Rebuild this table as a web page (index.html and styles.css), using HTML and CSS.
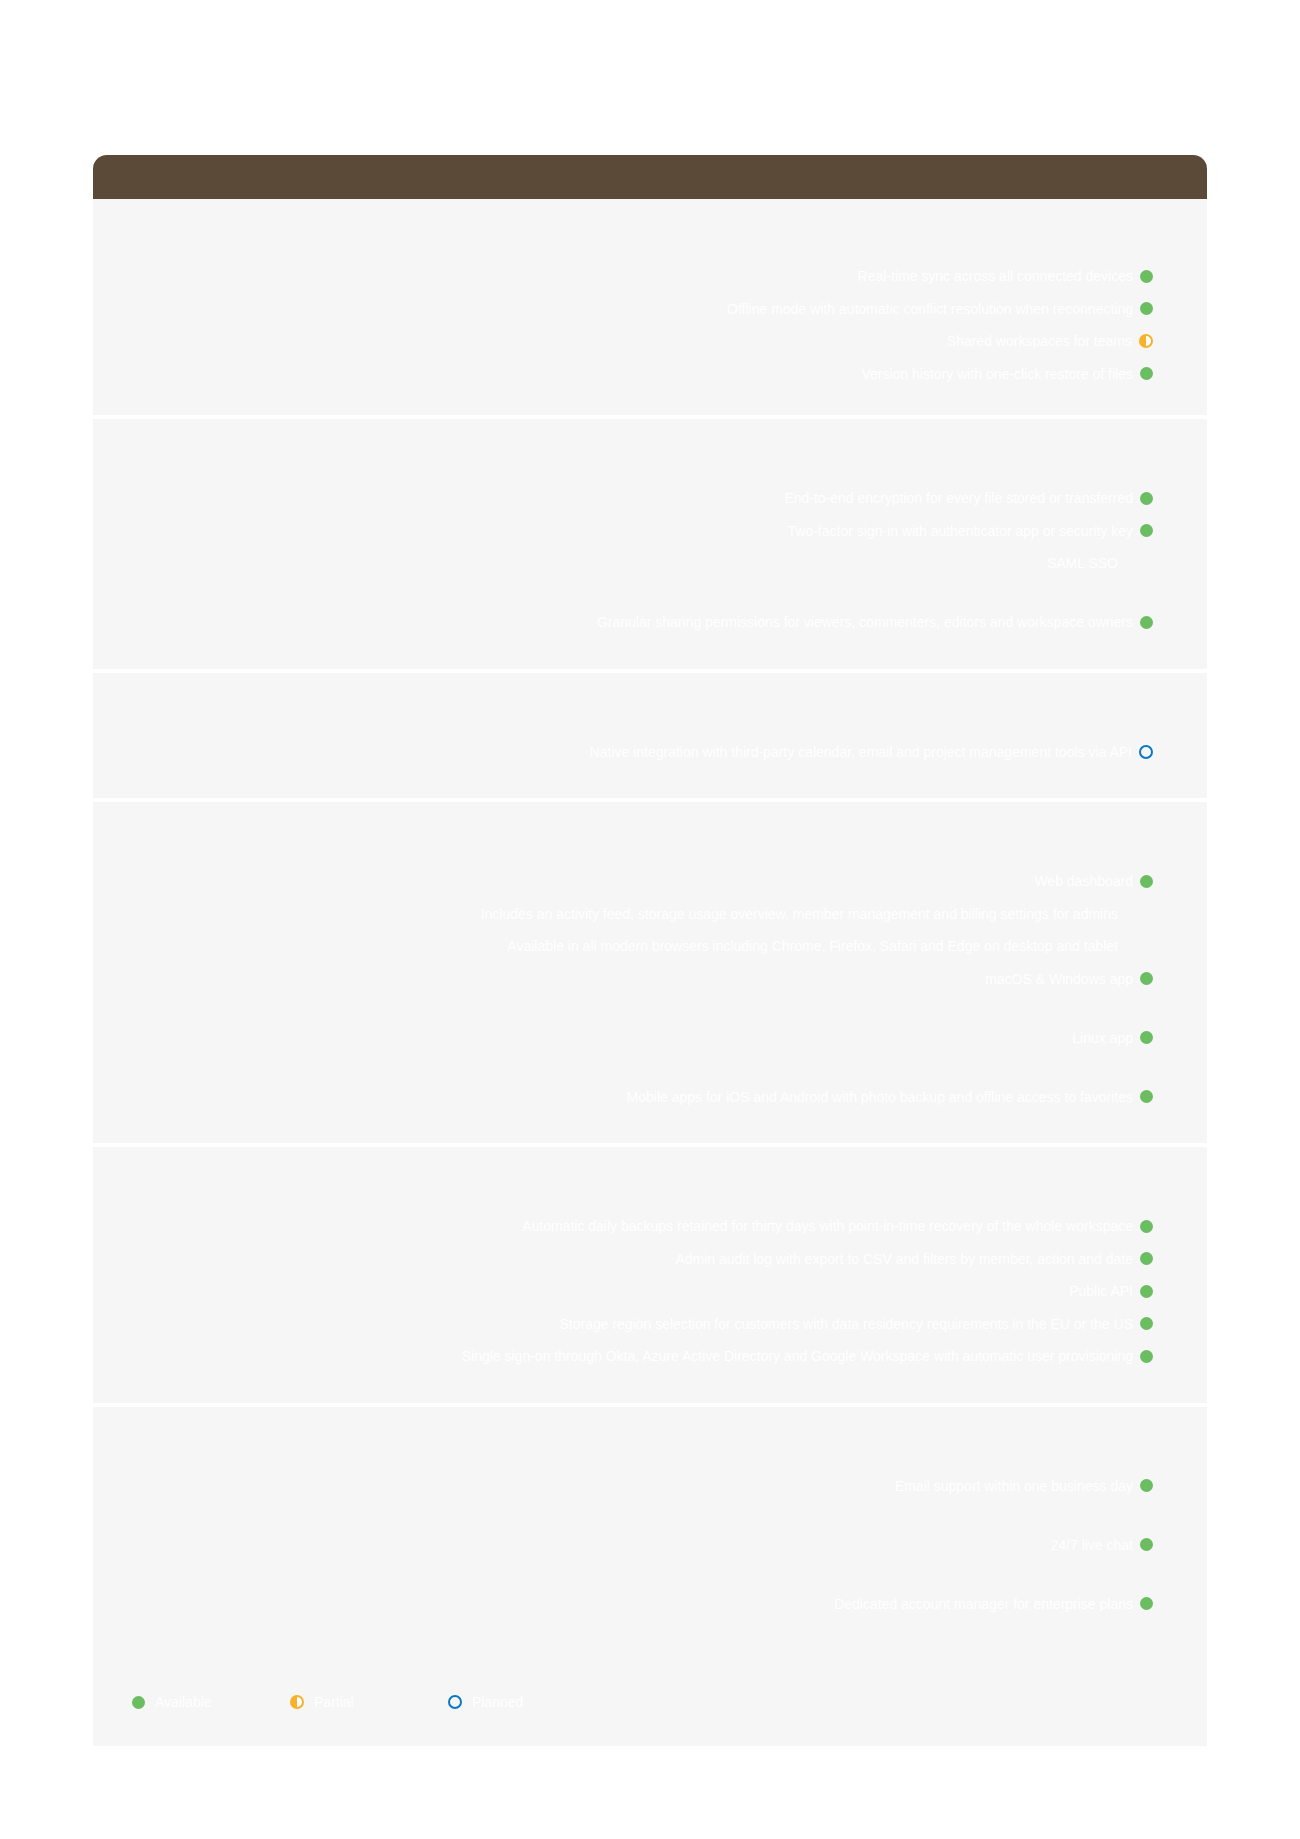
FILE: index.html
```html
<!DOCTYPE html>
<html lang="en">
<head>
  <meta charset="UTF-8" />
  <meta name="viewport" content="width=device-width, initial-scale=1"/>
  <title>Feature availability</title>
  <link rel="stylesheet" href="styles.css">
</head>
<body>
  <div class="sheet" role="main">
    <div class="sheet-head"></div>

    <section class="group">
      <div class="row"><span class="feat">Real-time sync across all connected devices</span><i class="dot yes"></i></div>
      <div class="row"><span class="feat">Offline mode with automatic conflict resolution when reconnecting</span><i class="dot yes"></i></div>
      <div class="row"><span class="feat">Shared workspaces for teams</span><i class="dot part"></i></div>
      <div class="row"><span class="feat">Version history with one-click restore of files</span><i class="dot yes"></i></div>
    </section>

    <section class="group">
      <div class="row"><span class="feat">End-to-end encryption for every file stored or transferred</span><i class="dot yes"></i></div>
      <div class="row"><span class="feat">Two-factor sign-in with authenticator app or security key</span><i class="dot yes"></i></div>
      <div class="row tall note"><span class="feat">SAML SSO</span></div>
      <div class="row"><span class="feat">Granular sharing permissions for viewers, commenters, editors and workspace owners</span><i class="dot yes"></i></div>
    </section>

    <section class="group">
      <div class="row"><span class="feat">Native integration with third-party calendar, email and project management tools via API</span><i class="dot plan"></i></div>
    </section>

    <section class="group">
      <div class="row"><span class="feat">Web dashboard</span><i class="dot yes"></i></div>
      <div class="row note"><span class="feat">Includes an activity feed, storage usage overview, member management and billing settings for admins</span></div>
      <div class="row note"><span class="feat">Available in all modern browsers including Chrome, Firefox, Safari and Edge on desktop and tablet</span></div>
      <div class="row tall"><span class="feat">macOS &amp; Windows app</span><i class="dot yes"></i></div>
      <div class="row tall"><span class="feat">Linux app</span><i class="dot yes"></i></div>
      <div class="row"><span class="feat">Mobile apps for iOS and Android with photo backup and offline access to favorites</span><i class="dot yes"></i></div>
    </section>

    <section class="group">
      <div class="row"><span class="feat">Automatic daily backups retained for thirty days with point-in-time recovery of the whole workspace</span><i class="dot yes"></i></div>
      <div class="row"><span class="feat">Admin audit log with export to CSV and filters by member, action and date</span><i class="dot yes"></i></div>
      <div class="row"><span class="feat">Public API</span><i class="dot yes"></i></div>
      <div class="row"><span class="feat">Storage region selection for customers with data residency requirements in the EU or the US</span><i class="dot yes"></i></div>
      <div class="row"><span class="feat">Single sign-on through Okta, Azure Active Directory and Google Workspace with automatic user provisioning</span><i class="dot yes"></i></div>
    </section>

    <section class="group last">
      <div class="row tall"><span class="feat">Email support within one business day</span><i class="dot yes"></i></div>
      <div class="row tall"><span class="feat">24/7 live chat</span><i class="dot yes"></i></div>
      <div class="row"><span class="feat">Dedicated account manager for enterprise plans</span><i class="dot yes"></i></div>

      <div class="legend">
        <div class="legend-item"><i class="dot yes"></i><span>Available</span></div>
        <div class="legend-item"><i class="dot part"></i><span>Partial</span></div>
        <div class="legend-item"><i class="dot plan"></i><span>Planned</span></div>
      </div>
    </section>
  </div>
</body>
</html>
```

FILE: styles.css
```css
body {
  font-family: 'Liberation Sans', Arial, sans-serif;
  margin: 0;
  background: #fff;
  color: #fff;
}
.sheet {
  width: 1114px;
  margin: 155px auto 0 auto;
  display: flex;
  flex-direction: column;
  gap: 4px;
}
.sheet-head {
  height: 44px;
  background: #5b4a37;
  border-radius: 14px 14px 0 0;
  margin-bottom: -4px;
}
.group {
  background: #f6f6f6;
  padding: 63px 54px 30px 0;
}
/* first block sits right under the brown bar */
.sheet-head + .group {
  padding-top: 61px;
  padding-bottom: 25px;
}
.row {
  height: 32.5px;
  display: flex;
  justify-content: flex-end;
  align-items: center;
  gap: 7px;
  font-size: 14px;
}
.row.tall {
  margin-bottom: 26.5px;
}
.row.note {
  padding-right: 35px;
}
.feat {
  color: #fff;
  white-space: nowrap;
}
.dot {
  display: inline-block;
  width: 13px;
  height: 13px;
  border-radius: 50%;
  box-sizing: border-box;
  flex: none;
}
.dot.yes {
  background: #6bbd62;
}
.dot.part {
  width: 14px;
  height: 14px;
  border: 2px solid #f7b12b;
  background: linear-gradient(to right, #f7b12b 50%, #fff 50%);
}
.dot.plan {
  width: 14px;
  height: 14px;
  border: 2.5px solid #0b77c3;
  background: transparent;
}
.group.last {
  padding-bottom: 36px;
}
.legend {
  display: grid;
  grid-template-columns: repeat(3, 158px);
  margin: 74px 0 0 39px;
  font-size: 14px;
}
.legend-item {
  display: flex;
  align-items: center;
  gap: 10px;
  height: 16px;
}
```
